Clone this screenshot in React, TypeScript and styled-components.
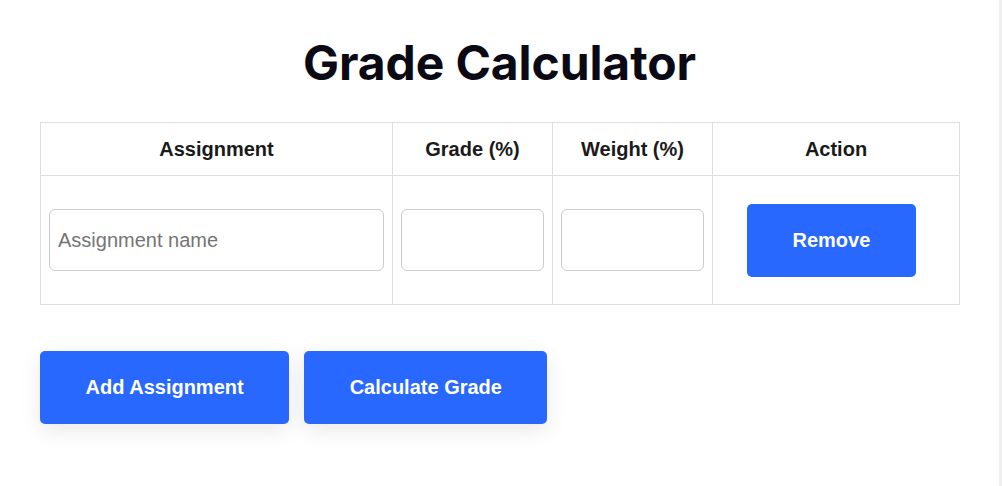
import styled, { createGlobalStyle } from 'styled-components';

const GlobalStyle = createGlobalStyle`
  * {
    box-sizing: border-box;
  }

  body {
    margin: 0;
    background: #ffffff;
    font-family: "Liberation Sans", Arial, sans-serif;
    color: #1a1a1a;
  }
`;

const columns = [
  { label: 'Assignment', width: 352 },
  { label: 'Grade (%)', width: 160 },
  { label: 'Weight (%)', width: 160 },
  { label: 'Action', width: 247 },
];

export default function App() {
  return (
    <>
      <GlobalStyle />
      <Page>
        <Title>Grade Calculator</Title>

        <Table>
          <colgroup>
            {columns.map((c) => (
              <col key={c.label} style={{ width: c.width }} />
            ))}
          </colgroup>
          <thead>
            <tr>
              {columns.map((c) => (
                <HeadCell key={c.label}>{c.label}</HeadCell>
              ))}
            </tr>
          </thead>
          <tbody>
            <tr>
              <Cell>
                <Field type="text" placeholder="Assignment name" />
              </Cell>
              <Cell>
                <Field type="number" />
              </Cell>
              <Cell>
                <Field type="number" />
              </Cell>
              <ActionCell>
                <Button type="button">Remove</Button>
              </ActionCell>
            </tr>
          </tbody>
        </Table>

        <Actions>
          <Button type="button" $raised>
            Add Assignment
          </Button>
          <Button type="button" $raised>
            Calculate Grade
          </Button>
        </Actions>
      </Page>
    </>
  );
}

const Page = styled.div`
  height: 100vh;
  overflow: hidden;
  padding: 34px 40px 0;
  border-right: 3px solid #efefef;
`;

const Title = styled.h1`
  margin: 0 0 30px;
  text-align: center;
  font-family: Inter, "Noto Sans", sans-serif;
  font-size: 48px;
  font-weight: 700;
  line-height: 58px;
  letter-spacing: -0.1px;
  color: #0b0a14;
`;

const Table = styled.table`
  width: 919px;
  border-collapse: collapse;
  table-layout: fixed;
`;

const HeadCell = styled.th`
  height: 53px;
  padding: 0 8px;
  border: 1px solid #dddddd;
  font-size: 20px;
  font-weight: 700;
  text-align: center;
  color: #1a1a1a;
`;

const Cell = styled.td`
  height: 129px;
  padding: 0 8px;
  border: 1px solid #dddddd;
  vertical-align: middle;
`;

const ActionCell = styled(Cell)`
  padding-left: 34px;
`;

const Field = styled.input`
  display: block;
  width: 100%;
  height: 62px;
  padding: 0 8px;
  border: 1px solid #cccccc;
  border-radius: 6px;
  font-family: "Liberation Sans", Arial, sans-serif;
  font-size: 20px;
  color: #1a1a1a;
  background: #ffffff;
  -moz-appearance: textfield;

  &::placeholder {
    color: #757575;
  }

  &::-webkit-outer-spin-button,
  &::-webkit-inner-spin-button {
    -webkit-appearance: none;
    margin: 0;
  }
`;

const Button = styled.button<{ $raised?: boolean }>`
  height: 73px;
  padding: 0 45.5px;
  border: none;
  border-radius: 5px;
  background: #2868ff;
  color: #ffffff;
  font-family: "Liberation Sans", Arial, sans-serif;
  font-size: 20px;
  font-weight: 700;
  cursor: pointer;
  box-shadow: ${({ $raised }) =>
    $raised ? '0 6px 22px rgba(0, 0, 0, 0.09)' : 'none'};
`;

const Actions = styled.div`
  display: flex;
  gap: 15px;
  margin-top: 46px;
`;
